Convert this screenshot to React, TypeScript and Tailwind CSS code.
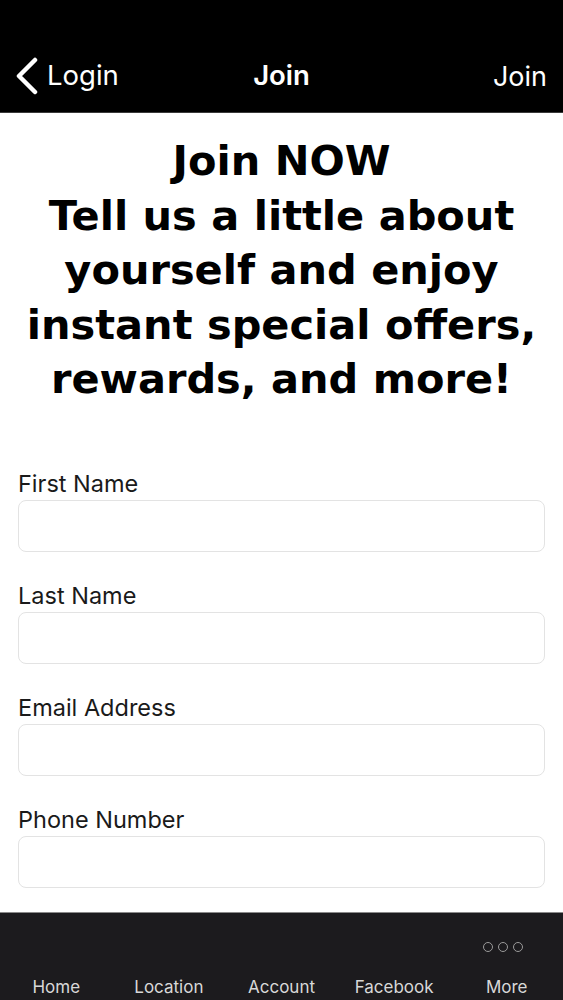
import React from "react";

const Field = ({ label, first }: { label: string; first?: boolean }) => (
  <div className={first ? "" : "mt-[30px]"}>
    <div className="text-[23.5px] leading-[28px] text-[#1a1a1a] mb-[2px]">{label}</div>
    <div className="h-[52px] rounded-[8px] border border-[#e3e3e3] bg-white" />
  </div>
);

export default function App() {
  return (
    <div className="w-[563px] h-[1000px] flex flex-col bg-white overflow-hidden" style={{ fontFamily: "Inter, 'Noto Sans', sans-serif" }}>
      <div className="h-[113px] bg-black flex flex-col shrink-0 border-b border-[#3a3a3a]">
        <div className="h-[40px]" />
        <div className="flex-1 relative flex items-center text-white">
          <div className="flex items-center pl-[14px]">
            <svg width="26" height="38" viewBox="0 0 26 38">
              <path d="M21 3 L5 19 L21 35" stroke="white" strokeWidth="4.5" fill="none" strokeLinecap="round" strokeLinejoin="round" />
            </svg>
            <span className="text-[27.5px] ml-[7px] leading-none">Login</span>
          </div>
          <div className="absolute left-0 right-0 text-center text-[27.5px] font-semibold leading-none pointer-events-none">Join</div>
          <div className="ml-auto pr-[16px] text-[27px] leading-none">Join</div>
        </div>
      </div>
      <div className="flex-1 px-[10px]">
        <h1
          className="text-center text-black font-bold text-[41.5px] leading-[54.5px] pt-[21px]"
          style={{ fontFamily: "'DejaVu Sans', Verdana, sans-serif" }}
        >
          Join NOW
          <br />
          Tell us a little about
          <br />
          yourself and enjoy
          <br />
          instant special offers,
          <br />
          rewards, and more!
        </h1>
        <div className="mt-[63px] px-[8px]">
          <Field label="First Name" first />
          <Field label="Last Name" />
          <Field label="Email Address" />
          <Field label="Phone Number" />
        </div>
      </div>
      <div className="h-[88px] shrink-0 bg-[#1c1b1e] border-t border-[#8a8a8a] grid grid-cols-5 text-[#d8d8d8] text-[17px]">
        {["Home", "Location", "Account", "Facebook", "More"].map((t) => (
          <div key={t} className="flex flex-col items-center justify-end pb-[2px]">
            {t === "More" && (
              <div className="flex gap-[5px] mb-[24px] mr-[8px]">
                {[0, 1, 2].map((i) => (
                  <div key={i} className="w-[10px] h-[10px] rounded-full border-[1.5px] border-[#9a9a9a]" />
                ))}
              </div>
            )}
            <span className="leading-[22px]">{t}</span>
          </div>
        ))}
      </div>
    </div>
  );
}
